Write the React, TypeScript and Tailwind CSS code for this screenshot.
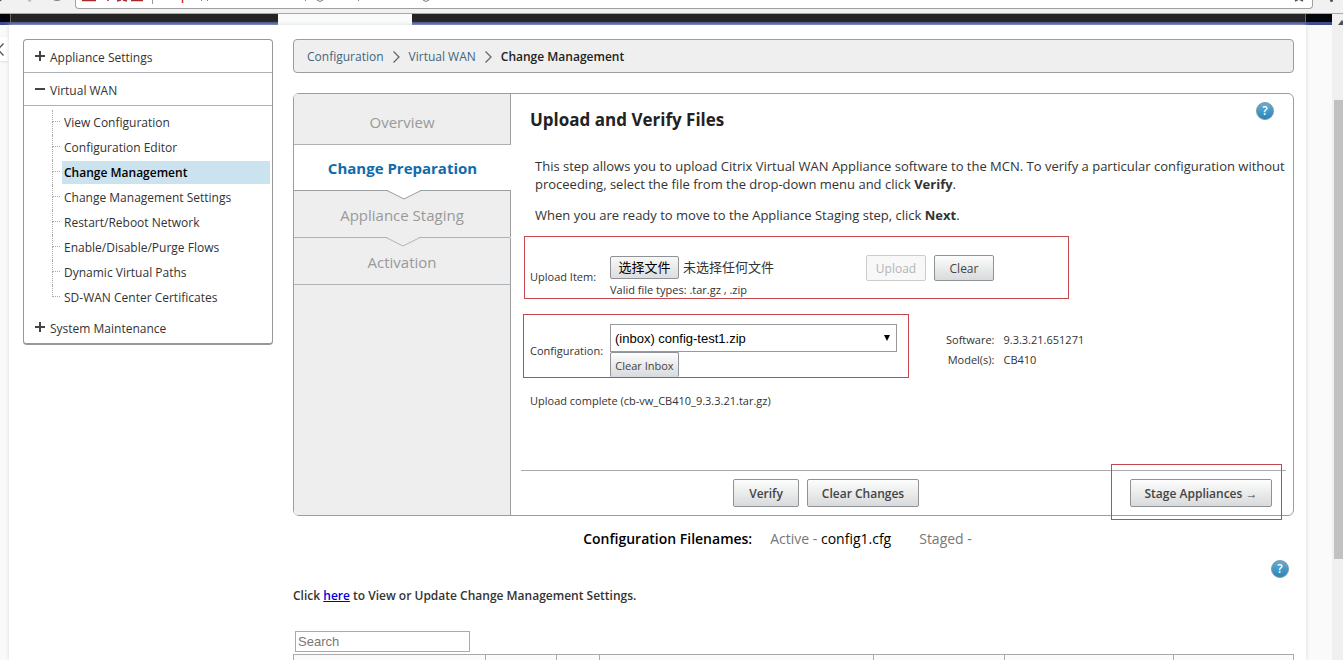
import type { ReactNode } from "react";

const VIRTUAL_WAN_ITEMS = [
  "View Configuration",
  "Configuration Editor",
  "Change Management",
  "Change Management Settings",
  "Restart/Reboot Network",
  "Enable/Disable/Purge Flows",
  "Dynamic Virtual Paths",
  "SD-WAN Center Certificates",
];

function BrowserEdge() {
  return (
    <div className="flex h-[14px] shrink-0 items-start border-b border-[#a8a8a8] bg-[#f1f1f1]">
      <svg className="h-2 w-[75px] shrink-0" viewBox="0 0 75 8" aria-hidden="true">
        <path d="M0 0h2l-2 1.500z" fill="#555" />
        <path d="M28 0l3 1" stroke="#bbb" strokeWidth="2" />
        <path d="M52 -2a6 4 0 0 0 10 0" fill="none" stroke="#555" strokeWidth="2" />
      </svg>
      <div className="h-[9px] flex-1 rounded-b border border-t-0 border-[#a0a0a0] bg-white">
        <svg className="block h-2 w-[380px]" viewBox="76 0 380 8" aria-hidden="true">
          <path d="M82 0.500h14M108 0v1M117 1l4-1M123 0l4 1M131 0.500h12" stroke="#a82a2e" strokeWidth="1.500" />
          <path d="M152.500 0v4" stroke="#999" />
          <path d="M182.500 0v3" stroke="#c33" strokeWidth="1.500" />
          <path d="M201 1l1-1M207 1l1-1M305 1l1-1M358 1l1-1" stroke="#888" />
          <path d="M317 0q3 3 6 0M423 0q3 3 6 0" fill="none" stroke="#777" />
        </svg>
      </div>
      <svg className="-ml-5 h-2 w-[50px] shrink-0" viewBox="1293 0 50 8" aria-hidden="true">
        <path d="M1295 1l4-2 4 2" fill="none" stroke="#555" strokeWidth="1.500" />
        <circle cx="1331.500" cy="0.500" r="1.500" fill="#555" />
      </svg>
    </div>
  );
}

function HeaderBar() {
  return (
    <div className="flex h-[11px] shrink-0">
      <div className="w-[10px] border-b-[3px] border-[#3f4d8f] bg-[#02050c]" />
      <div className="w-[268px] border-b-[3px] border-l border-b-[#3f4d8f] border-l-[#666] bg-[#242424]" />
      <div className="w-[134px] bg-[#fafcfc]" />
      <div className="flex-1 border-b-[3px] border-[#3f4d8f] bg-[#242424]" />
      <div className="w-[27px] border-b-[3px] border-l border-b-[#3f4d8f] border-l-[#666] bg-[#02050c]" />
    </div>
  );
}

function NavGroup({ open, children }: { open?: boolean; children: ReactNode }) {
  return (
    <button type="button" className="flex h-8 w-full items-center gap-[5px] pl-[11px] pt-1 text-left">
      <svg className="-mt-1 size-[10px]" viewBox="0 0 10 10" stroke="#444" strokeWidth="2" aria-hidden="true">
        <path d={open ? "M0 5h10" : "M0 5h10M5 0v10"} />
      </svg>
      {children}
    </button>
  );
}

function Sidebar() {
  return (
    <nav className="w-[250px] shrink-0 self-start rounded border border-b-2 border-[#94999d] bg-white text-[12px] text-[#333]">
      <NavGroup>Appliance Settings</NavGroup>
      <div className="border-y border-[#b0b3b5]">
        <NavGroup open>Virtual WAN</NavGroup>
      </div>
      <ul className="pb-[1px] pl-7 pr-[2px] pt-1">
        {VIRTUAL_WAN_ITEMS.map((item, i) => {
          const current = item === "Change Management";
          const last = i === VIRTUAL_WAN_ITEMS.length - 1;
          return (
            <li key={item} className="flex h-[25px]">
              <span className="flex w-[10px] shrink-0 flex-col pr-[2px]">
                <span className="h-3 border-b border-l border-dotted border-[#aaa]" />
                <span className={last ? "flex-1" : "flex-1 border-l border-dotted border-[#aaa]"} />
              </span>
              <a
                href="#"
                className={
                  current
                    ? "my-[1px] flex flex-1 items-center bg-[#cbe2ef] pl-[2px] font-semibold text-black"
                    : "my-[1px] flex flex-1 items-center pl-[2px]"
                }
              >
                {item}
              </a>
            </li>
          );
        })}
      </ul>
      <NavGroup>System Maintenance</NavGroup>
    </nav>
  );
}

function Breadcrumb() {
  const arrow = (
    <svg className="h-3 w-[7px]" viewBox="0 0 7 12" fill="none" stroke="#666" strokeWidth="1.300" aria-hidden="true">
      <path d="M0.500 0.500L6 6L0.500 11.500" />
    </svg>
  );
  return (
    <div className="flex h-[34px] items-center gap-[9px] rounded border border-[#999ea3] bg-[#efefef] px-[13px] pt-[2px] text-[12px] text-[#41667c]">
      <a href="#">Configuration</a>
      {arrow}
      <a href="#">Virtual WAN</a>
      {arrow}
      <span className="font-semibold text-[#222]">Change Management</span>
    </div>
  );
}

function HelpButton() {
  return (
    <button
      type="button"
      aria-label="Help"
      className="flex size-[18px] items-center justify-center rounded-full border border-[#7b95a3] bg-linear-to-b from-[#62add6] to-[#2585b8] text-[12px] font-semibold text-white"
    >
      ?
    </button>
  );
}

function Notch({ fill, stroke }: { fill: string; stroke: string }) {
  return (
    <svg className="absolute left-1/2 top-full -ml-4 h-[10px] w-[34px]" viewBox="0 0 34 10" aria-hidden="true">
      <path d="M0 0L17 8.500L34 0z" fill={fill} />
      <path d="M0 0.500L17 9L34 0.500" fill="none" stroke={stroke} />
    </svg>
  );
}

function Steps() {
  return (
    <ol className="flex w-[217px] shrink-0 flex-col rounded-l bg-[#eee] text-center text-[15px] text-[#999]">
      <li className="flex h-[51px] items-center justify-center border-b border-r border-b-[#b0b3b5] border-r-[#999ea3] pt-[6px]">
        Overview
      </li>
      <li className="relative flex h-[45px] items-center justify-center bg-white pt-[2px] font-bold text-[#0f6cab]">
        Change Preparation
        <span className="absolute inset-x-0 top-full border-b border-[#999ea3]" />
        <Notch fill="#fff" stroke="#999ea3" />
      </li>
      <li className="relative mt-[1px] flex h-[46px] items-center justify-center border-r border-[#999ea3] pt-[2px]">
        Appliance Staging
        <span className="absolute inset-x-0 top-full border-b border-[#b0b3b5]" />
        <Notch fill="#eee" stroke="#b0b3b5" />
      </li>
      <li className="mt-[1px] flex h-[47px] items-center justify-center border-b border-r border-b-[#b0b3b5] border-r-[#999ea3] pt-[2px]">
        Activation
      </li>
      <li className="flex-1 border-r border-[#999ea3]" aria-hidden="true" />
    </ol>
  );
}

const BUTTON = "rounded-xs border border-[#8f9396] bg-linear-to-b from-[#fdfdfd] to-[#d8dadb] pt-[2px] text-[#444]";

function UploadRow() {
  return (
    <div className="ml-[13px] flex h-[63px] w-[545px] border border-[#c5484d] pl-[5px] text-[11px]">
      <label htmlFor="package" className="w-20 shrink-0 pt-8 leading-4">
        Upload Item:
      </label>
      <div className="w-64 shrink-0 pt-[19px]">
        <div className="flex items-center gap-1 font-['Liberation_Sans','Noto_Sans_CJK_SC',sans-serif] text-[13px]">
          <label
            htmlFor="package"
            className="flex h-[23px] w-[69px] items-center justify-center rounded-xs border border-[#8f9396] bg-linear-to-b from-[#f8f8f8] to-[#dddddd] text-black"
          >
            选择文件
          </label>
          <span>未选择任何文件</span>
          <input id="package" type="file" className="sr-only" />
        </div>
        <p className="pt-[3px] leading-4">Valid file types: .tar.gz , .zip</p>
      </div>
      <div className="flex items-start gap-2 pt-[18px] text-[12px]">
        <button
          type="button"
          disabled
          className="h-[26px] w-[60px] rounded-xs border border-[#ccc] bg-[#f8f8f8] pt-[2px] text-[#b5b5b5]"
        >
          Upload
        </button>
        <button type="button" className={`${BUTTON} h-[26px] w-[60px]`}>
          Clear
        </button>
      </div>
    </div>
  );
}

function ConfigurationRow() {
  return (
    <div className="mt-[15px] flex text-[11px]">
      <div className="ml-3 flex h-16 w-[386px] shrink-0 border border-[#c5484d] pl-[6px]">
        <label htmlFor="configuration" className="w-20 shrink-0 pt-7 leading-4">
          Configuration:
        </label>
        <div className="w-[287px] pt-[9px]">
          <div className="relative">
            <select
              id="configuration"
              className="block h-7 w-full appearance-none border border-[#999] bg-white px-1 pt-[2px] font-['Liberation_Sans',sans-serif] text-[13px] text-black"
            >
              <option>(inbox) config-test1.zip</option>
            </select>
            <svg className="pointer-events-none absolute right-[7px] top-[11px] h-[6px] w-[6px]" viewBox="0 0 7 7" aria-hidden="true">
              <path d="M0 0h7L3.500 7z" fill="#000" />
            </svg>
          </div>
          <button type="button" className={`${BUTTON} h-[25px] w-[69px] border-b-0`}>
            Clear Inbox
          </button>
        </div>
      </div>
      <dl className="ml-[37px] grid grid-cols-[auto_auto] content-start gap-x-[9px] pt-4 leading-5">
        <dt className="text-right">Software:</dt>
        <dd>9.3.3.21.651271</dd>
        <dt className="text-right">Model(s):</dt>
        <dd>CB410</dd>
      </dl>
    </div>
  );
}

function Wizard() {
  return (
    <section className="mt-5 flex rounded-md border border-[#999ea3] bg-white">
      <Steps />
      <div className="relative min-w-0 flex-1 text-[#333]">
        <div className="flex items-start justify-between pl-[19px] pr-[19px] pt-2">
          <h1 className="pt-[6px] text-[17px] font-bold leading-6 text-[#222]">Upload and Verify Files</h1>
          <HelpButton />
        </div>
        <div className="mt-[25px] pl-6 text-[13px] leading-[18px]">
          <p>
            This step allows you to upload Citrix Virtual WAN Appliance software to the MCN. To verify a particular
            configuration without
            <br />
            proceeding, select the file from the drop-down menu and click <b>Verify</b>.
          </p>
          <p className="mb-3 mt-[13px]">
            When you are ready to move to the Appliance Staging step, click <b>Next</b>.
          </p>
        </div>
        <UploadRow />
        <ConfigurationRow />
        <p className="mt-[15px] pl-[19px] text-[11px] leading-4">Upload complete (cb-vw_CB410_9.3.3.21.tar.gz)</p>
        <div className="relative ml-[10px] mr-[7px] mt-[61px] flex border-t border-[#aaa] py-2 pr-[14px] text-[12px] font-semibold">
          <div className="flex flex-1 gap-2 pl-[212px]">
            <button type="button" className={`${BUTTON} h-7 w-[66px]`}>
              Verify
            </button>
            <button type="button" className={`${BUTTON} h-7 w-28`}>
              Clear Changes
            </button>
          </div>
          <button type="button" className={`${BUTTON} h-7 w-[142px]`}>
            Stage Appliances →
          </button>
          <div className="pointer-events-none absolute -bottom-[5px] -top-[7px] right-1 w-[171px] border border-[#c5484d]" />
        </div>
      </div>
    </section>
  );
}

function ApplianceTable() {
  return (
    <table className="mt-[2px] w-full table-fixed border-collapse border border-[#999]">
      <thead>
        <tr className="h-8 bg-[#fafafa]">
          <th className="w-[192px] border border-[#aaa]" />
          <th className="w-[71px] border border-[#aaa]" />
          <th className="w-[43px] border border-[#aaa]" />
          <th className="w-[274px] border border-[#aaa]" />
          <th className="w-[131px] border border-[#aaa]" />
          <th className="w-[169px] border border-[#aaa]" />
          <th className="border border-[#aaa]" />
        </tr>
      </thead>
    </table>
  );
}

function ScrollTrack() {
  return (
    <div className="flex w-[11px] shrink-0 flex-col bg-[#f0f0f0] pl-[2px]">
      <svg className="ml-1 mt-[6px] h-[5px] w-[7px] shrink-0" viewBox="0 0 7 5" aria-hidden="true">
        <path d="M0 5L4 0L8 5z" fill="#505050" />
      </svg>
      <div className="mt-[75px] h-[71%] bg-[#c1c1c1]" />
    </div>
  );
}

export default function App() {
  return (
    <div className="flex h-screen flex-col overflow-hidden bg-[#fafafa] font-['Open_Sans','Noto_Sans',sans-serif]">
      <BrowserEdge />
      <div className="flex min-h-0 flex-1">
        <div className="flex min-w-0 flex-1 flex-col">
          <HeaderBar />
          <div className="flex min-h-0 flex-1 pr-[26px]">
            <button type="button" aria-label="Collapse menu" className="mt-3 flex h-6 w-[9px] shrink-0 items-center bg-white shadow">
              <svg className="h-[13px] w-1" viewBox="0 0 4 13" fill="none" stroke="#555" strokeWidth="1.300" aria-hidden="true">
                <path d="M3.500 0.500L-2 6.500L3.500 12.500" />
              </svg>
            </button>
            <div className="flex min-w-0 flex-1 gap-5 bg-white pl-[14px] pr-3 pt-[14px] shadow-[0_0_4px_#d8d8d8]">
              <Sidebar />
              <main className="min-w-0 flex-1">
                <Breadcrumb />
                <Wizard />
                <div className="mt-[13px] flex justify-center pr-8 text-[14px] leading-5 text-[#777]">
                  <span className="font-semibold text-black">Configuration Filenames:</span>
                  <span className="pl-[18px]">
                    Active - <span className="text-black">config1.cfg</span>
                  </span>
                  <span className="pl-7">Staged -</span>
                </div>
                <div className="mt-[11px] flex justify-end pr-[5px]">
                  <HelpButton />
                </div>
                <p className="mt-[10px] text-[12px] font-semibold leading-4 text-[#333]">
                  Click{" "}
                  <a href="#" className="text-[#0000dd] underline">
                    here
                  </a>{" "}
                  to View or Update Change Management Settings.
                </p>
                <input
                  type="text"
                  aria-label="Search"
                  placeholder="Search"
                  className="ml-[2px] mt-[27px] block h-[21px] w-[175px] border border-[#aaa] px-[2px] font-['Liberation_Sans',sans-serif] text-[13px] placeholder:text-[#777]"
                />
                <ApplianceTable />
              </main>
            </div>
          </div>
        </div>
        <ScrollTrack />
      </div>
    </div>
  );
}
